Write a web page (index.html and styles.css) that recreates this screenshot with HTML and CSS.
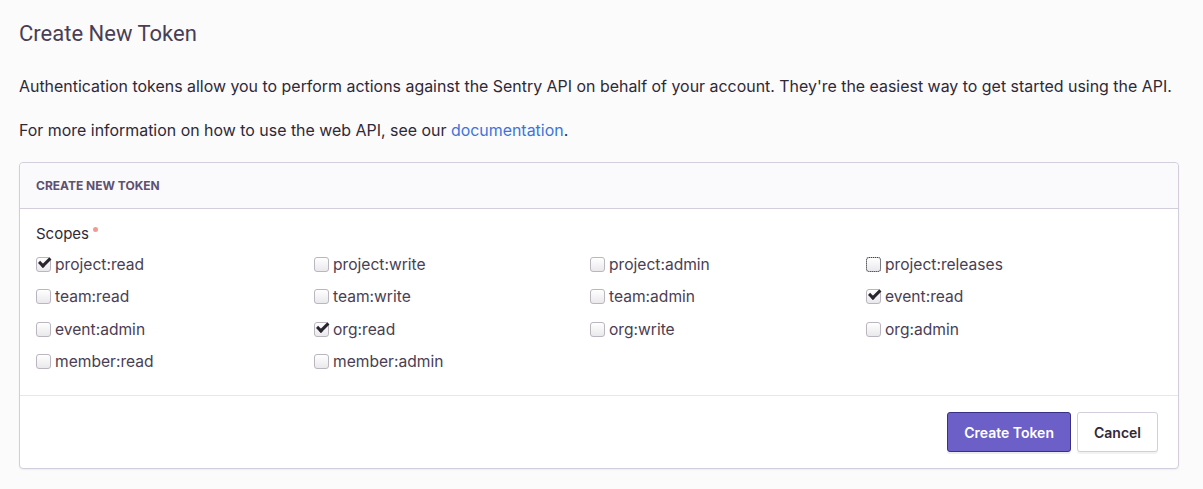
FILE: index.html
```html
<!DOCTYPE html>
<html>
<head>
<meta charset="utf-8">
<link rel="stylesheet" href="styles.css">
</head>
<body>
<div class="page">
  <h1 class="title">Create New Token</h1>
  <p class="text">Authentication tokens allow you to perform actions against the Sentry API on behalf of your account. They're the easiest way to get started using the API.</p>
  <p class="text">For more information on how to use the web API, see our <a class="link" href="#">documentation</a>.</p>
  <div class="panel">
    <div class="panel-header">Create New Token</div>
    <div class="panel-body">
      <div class="field-label">Scopes<span class="req"></span></div>
      <div class="scopes">
        <label class="scope"><span class="cb checked"></span>project:read</label>
        <label class="scope"><span class="cb"></span>project:write</label>
        <label class="scope"><span class="cb"></span>project:admin</label>
        <label class="scope"><span class="cb focused"></span>project:releases</label>
        <label class="scope"><span class="cb"></span>team:read</label>
        <label class="scope"><span class="cb"></span>team:write</label>
        <label class="scope"><span class="cb"></span>team:admin</label>
        <label class="scope"><span class="cb checked"></span>event:read</label>
        <label class="scope"><span class="cb"></span>event:admin</label>
        <label class="scope"><span class="cb checked"></span>org:read</label>
        <label class="scope"><span class="cb"></span>org:write</label>
        <label class="scope"><span class="cb"></span>org:admin</label>
        <label class="scope"><span class="cb"></span>member:read</label>
        <label class="scope"><span class="cb"></span>member:admin</label>
      </div>
    </div>
    <div class="panel-footer">
      <button class="btn btn-primary">Create Token</button>
      <button class="btn btn-default">Cancel</button>
    </div>
  </div>
</div>
</body>
</html>
```
FILE: styles.css
```css
html, body {
  margin: 0;
  padding: 0;
  background: #fbfbfc;
}
body {
  font-family: Inter, Roboto, sans-serif;
  color: #2f2936;
  font-size: 15.93px;
}
.page {
  padding: 21px 24px 20px 19px;
}
.title {
  margin: 0 0 27px 0;
  font-family: Roboto, sans-serif;
  font-size: 22px;
  font-weight: 400;
  line-height: 26px;
  color: #493e54;
}
.text {
  margin: 0 0 19px 0;
  line-height: 25px;
  color: #2f2936;
}
.link {
  color: #3d74db;
  text-decoration: none;
}
.panel {
  margin-top: 19px;
  border: 1px solid #d3cedb;
  border-radius: 4px;
  background: #fff;
  box-shadow: 0 1px 2px rgba(0,0,0,0.06);
}
.panel-header {
  height: 46px;
  box-sizing: border-box;
  padding: 0 16px;
  display: flex;
  align-items: center;
  background: #fafafc;
  border-bottom: 1px solid #d3cedb;
  border-radius: 4px 4px 0 0;
  text-transform: uppercase;
  font-size: 12px;
  font-weight: 700;
  color: #5e5070;
}
.panel-body {
  padding: 15px 16px 17px 16px;
  border-bottom: 1px solid #e8e6ec;
}
.field-label {
  font-size: 15px;
  line-height: 20px;
  color: #2f2936;
  margin-bottom: 4px;
}
.req {
  display: inline-block;
  width: 5px;
  height: 5px;
  border-radius: 50%;
  background: #f59a8e;
  margin-left: 4px;
  vertical-align: 7px;
}
.scopes {
  display: grid;
  grid-template-columns: 278px 276px 276px 1fr;
}
.scope {
  display: flex;
  align-items: center;
  height: 32.5px;
  font-size: 15.6px;
  color: #493e54;
}
.cb {
  width: 15px;
  height: 15px;
  box-sizing: border-box;
  border: 1px solid #bab5bf;
  border-radius: 3px;
  background: linear-gradient(#ffffff, #e9e8eb);
  margin-right: 4px;
  position: relative;
  flex: none;
}
.cb.checked::after {
  content: "";
  position: absolute;
  left: 1px;
  top: -1px;
  width: 12px;
  height: 7px;
  border-left: 3px solid #2a2630;
  border-bottom: 3px solid #2a2630;
  transform: rotate(-45deg) translate(0px, 1px);
  box-sizing: border-box;
}
.cb.focused {
  outline: 1px dotted #444;
  outline-offset: -1px;
}
.panel-footer {
  display: flex;
  justify-content: flex-end;
  gap: 6px;
  padding: 16px 20px 16px 16px;
}
.btn {
  font-family: inherit;
  font-size: 14px;
  font-weight: 600;
  height: 40px;
  border-radius: 3px;
  padding: 0 16px;
  cursor: pointer;
}
.btn-primary {
  background: #6c5fc7;
  border: 1px solid #3a2f87;
  color: #fff;
  box-shadow: 0 2px 0 rgba(0,0,0,0.08);
}
.btn-default {
  background: #fff;
  border: 1px solid #d3cedb;
  color: #2f2936;
  box-shadow: 0 2px 0 rgba(0,0,0,0.05);
}
```
